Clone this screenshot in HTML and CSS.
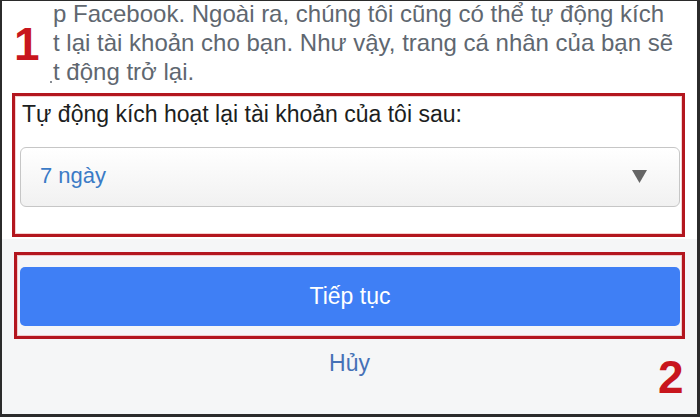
FILE: index.html
```html
<!DOCTYPE html>
<html lang="vi">
<head>
<meta charset="utf-8">
<title>Tự động kích hoạt lại tài khoản</title>
<link rel="stylesheet" href="styles.css">
</head>
<body>
<div class="frame">
  <section class="top">
    <div class="para">
      <div class="line">p Facebook. Ngoài ra, chúng tôi cũng có thể tự động kích</div>
      <div class="line">t lại tài khoản cho bạn. Như vậy, trang cá nhân của bạn sẽ</div>
      <div class="line"><span class="dot"></span>t động trở lại.</div>
    </div>
    <div class="box box1">
      <div class="label">Tự động kích hoạt lại tài khoản của tôi sau:</div>
      <div class="select">
        <span class="value">7 ngày</span>
        <svg class="caret" width="15" height="13" viewBox="0 0 15 13"><polygon points="0,0 15,0 7.5,13" fill="#666"/></svg>
      </div>
    </div>
  </section>
  <section class="bottom">
    <div class="box box2">
      <div class="btn">Tiếp tục</div>
    </div>
    <div class="cancel">Hủy</div>
  </section>
  <div class="num num1">1</div>
  <div class="num num2">2</div>
</div>
</body>
</html>
```
FILE: styles.css
```css
html, body {
  margin: 0;
  padding: 0;
  background: #2b2b2b;
}
.frame {
  position: relative;
  width: 700px;
  height: 417px;
  box-sizing: border-box;
  border-style: solid;
  border-color: #2b2b2b;
  border-width: 1px 3px 3px 2px;
  display: flex;
  flex-direction: column;
  font-family: "Liberation Sans", Arial, sans-serif;
  overflow: hidden;
}
.top {
  background: #ffffff;
  padding-bottom: 2px;
}
.para {
  padding-left: 51px;
  margin-top: -2px;
  color: #606770;
  font-size: 24px;
  line-height: 29px;
  white-space: nowrap;
}
.dot {
  display: inline-block;
  width: 2px;
  height: 2px;
  border-radius: 1px;
  background: #606770;
  margin-left: -3px;
  margin-right: 1px;
  vertical-align: -3px;
}
.box {
  border: 3px solid #b3161e;
  box-shadow: inset 0 0 0 1px rgba(230, 120, 120, 0.35);
}
.box1 {
  margin: 7px 0 0 10px;
  width: 673px;
  box-sizing: border-box;
  padding: 5px 0 27px 5px;
}
.label {
  padding-left: 2px;
  font-size: 23px;
  line-height: 26px;
  color: #1c1e21;
  white-space: nowrap;
}
.select {
  margin-top: 20px;
  width: 660px;
  height: 60px;
  box-sizing: border-box;
  border: 1px solid #c6c6c6;
  border-radius: 6px;
  background: linear-gradient(#ffffff, #f1f1f1);
  display: flex;
  align-items: center;
  justify-content: space-between;
  padding: 0 32px 0 19px;
}
.value {
  font-size: 22px;
  color: #3b7bc6;
  margin-top: -2px;
}
.caret {
  display: block;
  margin-top: -2px;
}
.bottom {
  flex: 1;
  background: #f5f6f7;
  display: flex;
  flex-direction: column;
}
.box2 {
  margin: 13px 0 0 12px;
  width: 671px;
  box-sizing: border-box;
  padding: 12px 2px 10px 3px;
}
.btn {
  height: 59px;
  border-radius: 5px;
  background: #3f7ff5;
  color: #ffffff;
  font-size: 23px;
  display: flex;
  align-items: center;
  justify-content: center;
}
.cancel {
  margin-top: 9px;
  text-align: center;
  font-size: 23px;
  line-height: 30px;
  color: #4571b6;
}
.num {
  position: absolute;
  font-size: 46px;
  line-height: 46px;
  font-weight: bold;
  color: #c8161d;
}
.num1 {
  left: 12px;
  top: 20px;
}
.num2 {
  left: 656px;
  top: 353px;
}
```
